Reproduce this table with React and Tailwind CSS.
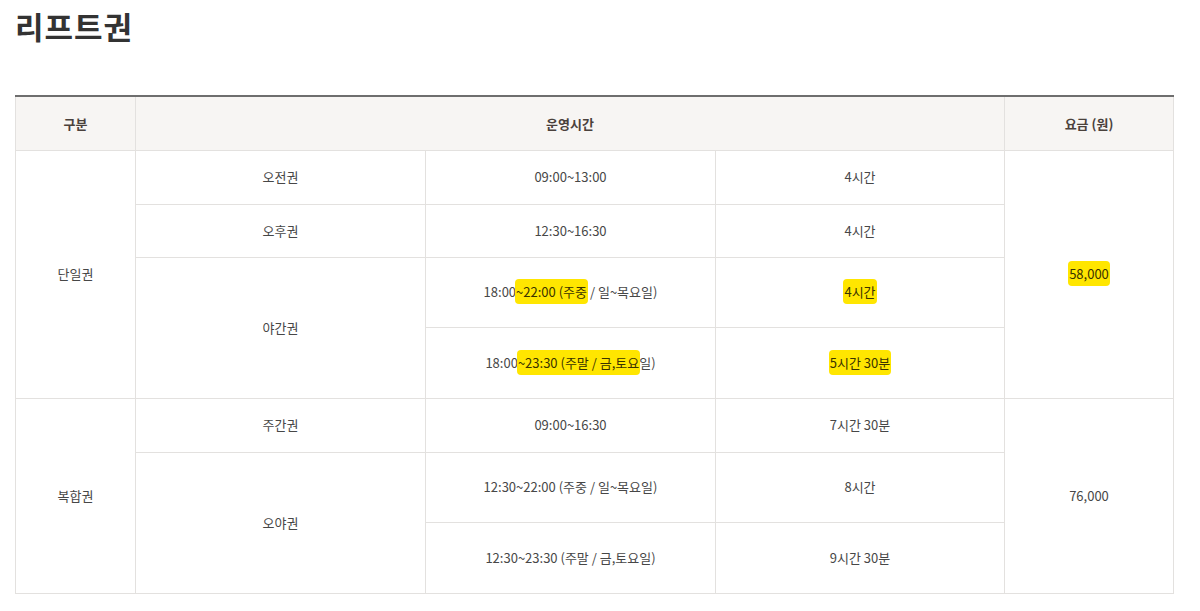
import React from 'react';

const Hl = ({ children }) => (
  <span className="bg-[#ffe600] rounded-[4px] py-[3px] -mx-[1px] px-[1px] text-[#3a3300]">{children}</span>
);

const td = 'border border-[#e3e1df] text-center align-middle';

export default function App() {
  return (
    <div
      className="w-[1200px] h-[611px] bg-white overflow-hidden text-[#474747]"
      style={{ fontFamily: '"Noto Sans CJK KR", "Noto Sans", sans-serif' }}
    >
      {/* 제목 */}
      <h1 className="pl-[15px] pt-[5px] text-[31px] font-bold leading-[42px] text-[#333] tracking-[1px]">
        리프트권
      </h1>

      {/* 요금표 */}
      <div className="pl-[15px] pt-[48px]">
        <table className="w-[1158px] border-collapse table-fixed text-[13px] border-t-2 border-t-[#6e6e6e]">
          <colgroup>
            <col className="w-[120px]" />
            <col className="w-[290px]" />
            <col className="w-[290px]" />
            <col className="w-[289px]" />
            <col className="w-[169px]" />
          </colgroup>
          <thead>
            <tr className="h-[54px] bg-[#f7f5f3]">
              <th className={`${td} border-t-0 font-bold text-[#4a413c]`}>구분</th>
              <th colSpan={3} className={`${td} border-t-0 font-bold text-[#4a413c]`}>운영시간</th>
              <th className={`${td} border-t-0 font-bold text-[#4a413c]`}>요금 (원)</th>
            </tr>
          </thead>
          <tbody>
            <tr className="h-[54px]">
              <td rowSpan={4} className={td}>단일권</td>
              <td className={td}>오전권</td>
              <td className={td}>09:00~13:00</td>
              <td className={td}>4시간</td>
              <td rowSpan={4} className={td}>
                <Hl>58,000</Hl>
              </td>
            </tr>
            <tr className="h-[53px]">
              <td className={td}>오후권</td>
              <td className={td}>12:30~16:30</td>
              <td className={td}>4시간</td>
            </tr>
            <tr className="h-[70px]">
              <td rowSpan={2} className={td}>야간권</td>
              <td className={td}>
                18:00<Hl>~22:00 (주중</Hl> / 일~목요일)
              </td>
              <td className={td}>
                <Hl>4시간</Hl>
              </td>
            </tr>
            <tr className="h-[71px]">
              <td className={td}>
                18:00<Hl>~23:30 (주말 / 금,토요</Hl>일)
              </td>
              <td className={td}>
                <Hl>5시간 30분</Hl>
              </td>
            </tr>
            <tr className="h-[54px]">
              <td rowSpan={3} className={td}>복합권</td>
              <td className={td}>주간권</td>
              <td className={td}>09:00~16:30</td>
              <td className={td}>7시간 30분</td>
              <td rowSpan={3} className={td}>76,000</td>
            </tr>
            <tr className="h-[70px]">
              <td rowSpan={2} className={td}>오야권</td>
              <td className={td}>12:30~22:00 (주중 / 일~목요일)</td>
              <td className={td}>8시간</td>
            </tr>
            <tr className="h-[71px]">
              <td className={td}>12:30~23:30 (주말 / 금,토요일)</td>
              <td className={td}>9시간 30분</td>
            </tr>
          </tbody>
        </table>
      </div>
    </div>
  );
}
